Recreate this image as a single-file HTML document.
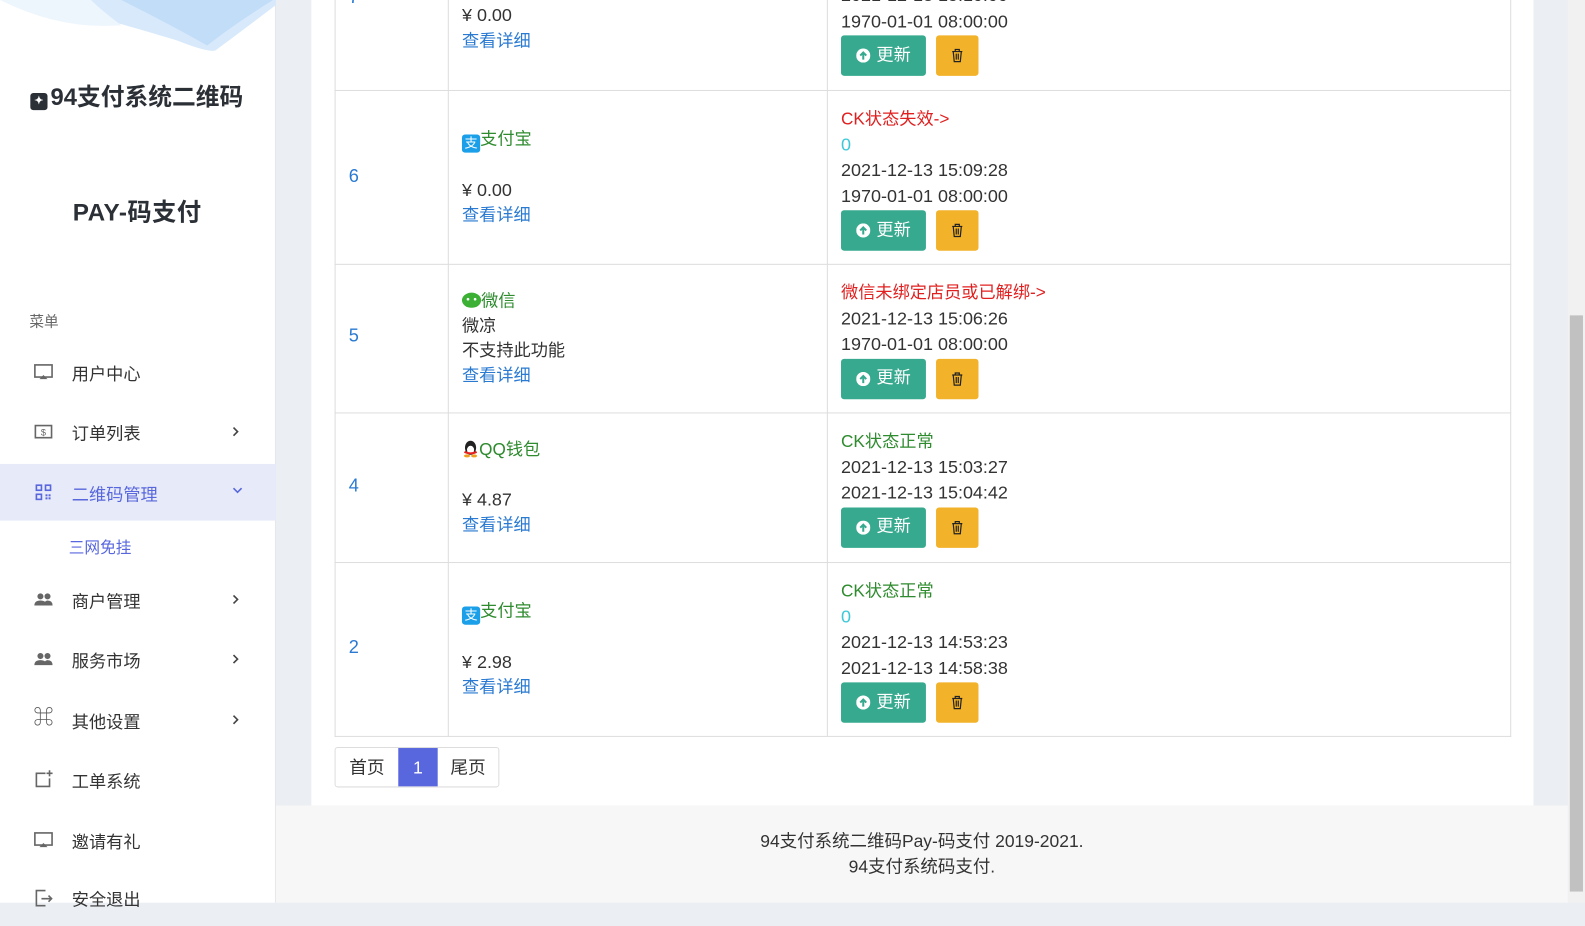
<!DOCTYPE html>
<html><head><meta charset="utf-8">
<style>
*{margin:0;padding:0;box-sizing:border-box}
body{width:1585px;height:903px;overflow:hidden;position:relative;background:#ebeef2;font-family:"Liberation Sans","Noto Sans CJK SC",sans-serif;font-size:17px;color:#333}
#w{position:absolute;left:0;top:0;width:1568px;height:893px;transform:scale(1.01084);transform-origin:0 0;background:#ebeef2}
.abs{position:absolute}
#side{left:0;top:0;width:273px;height:893px;background:#fff;border-right:1px solid #e4e6ea}
.mi{position:absolute;left:0;width:273px;height:56px;font-size:17px;color:#333}
.mi .ic{position:absolute;left:33px;top:18px;width:20px;height:20px}
.mi .tx{position:absolute;left:71px;top:16px}
.mi .ar{position:absolute;left:229px;top:22px}
#card{left:308px;top:0;width:1209px;height:797px;background:#fff}
#foot{left:273px;top:797px;width:1278px;height:96px;background:#f7f7f7;text-align:center;font-size:17.3px;color:#333;line-height:25px;padding-top:23px;padding-right:0}
#sb{left:1551px;top:0;width:17px;height:893px;background:#f1f1f1}
.hl{position:absolute;left:331px;width:1164px;height:1px;background:#ddd}
.vl{position:absolute;width:1px;background:#ddd}
.cell{position:absolute;line-height:24.6px;font-size:17px}
.d{font-size:17.8px}
.num{position:absolute;left:345px;color:#2a7ad2;font-size:18px}
.blue{color:#2a7ad2}.green{color:#2e8b2e}.red{color:#e02020}.cyan{color:#3cc8d8}
.btns{display:flex;gap:10px;margin-top:1px}
.bu{width:84px;height:40px;background:#36a98e;border-radius:3px;color:#fff;display:flex;align-items:center;justify-content:center;gap:6px;font-size:17px}
.bd{width:42px;height:40px;background:#f2b22a;border-radius:3px;display:flex;align-items:center;justify-content:center}
.ali{display:inline-block;width:18px;height:18px;background:#1a9fe8;border-radius:3px;vertical-align:-3px;color:#fff;font-size:13px;line-height:18px;text-align:center}
</style></head><body>
<div id="w">
<div id="side" class="abs">
  <svg class="abs" style="left:0;top:0" width="273" height="60" viewBox="0 0 273 60">
    <path d="M30 0 Q110 20 175 40 Q205 52 213 50 Q240 30 273 5 L273 0Z" fill="#d7e9fb"/>
    <path d="M120 0 Q170 25 205 45 Q230 25 270 0Z" fill="#bcdaf6" opacity=".8"/>
    <path d="M0 0 Q60 30 120 25 Q100 10 90 0Z" fill="#eef6fd"/>
  </svg>
  <div class="abs" style="left:30px;top:77px;font-size:23.5px;font-weight:bold;color:#2b2f36;white-space:nowrap"><span style="display:inline-block;width:17px;height:17px;background:#2b2f36;border-radius:3px;vertical-align:1px;margin-right:3px;color:#fff;font-size:11px;text-align:center;line-height:17px">✦</span>94支付系统二维码</div>
  <div class="abs" style="left:72px;top:190px;font-size:24px;font-weight:bold;color:#2b2f36;letter-spacing:0.5px">PAY-码支付</div>
  <div class="abs" style="left:29px;top:307px;font-size:14.5px;color:#666">菜单</div>
  <div class="mi" style="top:340px"><svg class="ic" viewBox="0 0 20 20"><rect x="1.5" y="3" width="17" height="12" fill="none" stroke="#666" stroke-width="1.6"/><path d="M6 17h8l-4-4z" fill="#666"/></svg><span class="tx">用户中心</span></div>
  <div class="mi" style="top:399px"><svg class="ic" viewBox="0 0 20 20"><rect x="2" y="4" width="16" height="12" fill="none" stroke="#666" stroke-width="1.6"/><text x="10" y="14" font-size="9" text-anchor="middle" fill="#666" font-family="Liberation Sans">$</text></svg><span class="tx">订单列表</span><svg class="ar" width="8" height="12" viewBox="0 0 8 12"><path d="M2 2l4 4-4 4" stroke="#444" stroke-width="1.6" fill="none"/></svg></div>
  <div class="mi" style="top:459px;background:#e7eaf8"><svg class="ic" viewBox="0 0 20 20" fill="#5867dd"><rect x="3" y="3" width="5" height="5" fill="none" stroke="#5867dd" stroke-width="1.6"/><rect x="3" y="12" width="5" height="5" fill="none" stroke="#5867dd" stroke-width="1.6"/><rect x="12" y="3" width="5" height="5" fill="none" stroke="#5867dd" stroke-width="1.6"/><rect x="12" y="12" width="2" height="2"/><rect x="15" y="15" width="2" height="2"/><rect x="15" y="12" width="2" height="2"/><rect x="12" y="15" width="2" height="2"/></svg><span class="tx" style="color:#5867dd">二维码管理</span><svg class="ar" width="12" height="8" viewBox="0 0 12 8"><path d="M2 2l4 4 4-4" stroke="#5867dd" stroke-width="1.6" fill="none"/></svg></div>
  <div class="abs" style="left:68px;top:530px;font-size:15.5px;color:#5867dd">三网免挂</div>
  <div class="mi" style="top:565px"><svg class="ic" viewBox="0 0 20 20" fill="#666"><circle cx="7" cy="7" r="3"/><circle cx="14" cy="7" r="3"/><path d="M1 16q0-5 6-5t6 5zM10 16q1-5 4-5 5 0 5 5z"/></svg><span class="tx">商户管理</span><svg class="ar" width="8" height="12" viewBox="0 0 8 12"><path d="M2 2l4 4-4 4" stroke="#444" stroke-width="1.6" fill="none"/></svg></div>
  <div class="mi" style="top:624px"><svg class="ic" viewBox="0 0 20 20" fill="#666"><circle cx="7" cy="7" r="3"/><circle cx="14" cy="7" r="3"/><path d="M1 16q0-5 6-5t6 5zM10 16q1-5 4-5 5 0 5 5z"/></svg><span class="tx">服务市场</span><svg class="ar" width="8" height="12" viewBox="0 0 8 12"><path d="M2 2l4 4-4 4" stroke="#444" stroke-width="1.6" fill="none"/></svg></div>
  <div class="mi" style="top:684px"><span class="ic" style="font-size:20px;color:#555;line-height:20px;top:16px">⌘</span><span class="tx">其他设置</span><svg class="ar" width="8" height="12" viewBox="0 0 8 12"><path d="M2 2l4 4-4 4" stroke="#444" stroke-width="1.6" fill="none"/></svg></div>
  <div class="mi" style="top:743px"><svg class="ic" viewBox="0 0 20 20"><path d="M12 4H3v13h13V9" fill="none" stroke="#666" stroke-width="1.6"/><path d="M16 1v6M13 4h6" stroke="#666" stroke-width="1.6"/></svg><span class="tx">工单系统</span></div>
  <div class="mi" style="top:803px"><svg class="ic" viewBox="0 0 20 20"><rect x="1.5" y="3" width="17" height="12" fill="none" stroke="#666" stroke-width="1.6"/><path d="M6 17h8l-4-4z" fill="#666"/></svg><span class="tx">邀请有礼</span></div>
  <div class="mi" style="top:860px"><svg class="ic" viewBox="0 0 20 20"><path d="M12 3H3v15h9" fill="none" stroke="#666" stroke-width="1.6"/><path d="M8 11h10M15 8l3 3-3 3" fill="none" stroke="#666" stroke-width="1.6"/></svg><span class="tx">安全退出</span></div>
</div>

<div id="card" class="abs"></div>
<div class="vl" style="left:331px;top:0;height:729px"></div>
<div class="vl" style="left:1494px;top:0;height:729px"></div>
<div class="vl" style="left:443px;top:0;height:729px"></div>
<div class="vl" style="left:818px;top:0;height:729px"></div>
<div class="hl" style="top:89px"></div>
<div class="hl" style="top:261px"></div>
<div class="hl" style="top:408px"></div>
<div class="hl" style="top:556px"></div>
<div class="hl" style="top:728px"></div>

<div class="num" style="top:-13px">7</div>
<div class="cell" style="left:457px;top:3px"><span class="d">¥ 0.00</span><br><span class="blue">查看详细</span></div>
<div class="cell" style="left:832px;top:-17px"><span class="d">2021-12-13 15:10:00</span><br><span class="d">1970-01-01 08:00:00</span>
<div class="btns"><div class="bu"><svg width="14" height="14" viewBox="0 0 14 14"><circle cx="7" cy="7" r="7" fill="#fff"/><path d="M7 11V4M4 7l3-3 3 3" stroke="#36a98e" stroke-width="2" fill="none"/></svg>更新</div><div class="bd"><svg width="12" height="14" viewBox="0 0 12 14"><path d="M1 3h10M4 3V1h4v2M2 3l1 10h6l1-10M5 5v6M7 5v6" stroke="#222" stroke-width="1.2" fill="none"/></svg></div></div></div>

<div class="num" style="top:164px">6</div>
<div class="cell" style="left:457px;top:126px"><span class="ali">支</span><span class="green">支付宝</span><br>&nbsp;<br><span class="d">¥ 0.00</span><br><span class="blue">查看详细</span></div>
<div class="cell" style="left:832px;top:106px"><span class="red">CK状态失效-&gt;</span><br><span class="cyan d">0</span><br><span class="d">2021-12-13 15:09:28</span><br><span class="d">1970-01-01 08:00:00</span>
<div class="btns"><div class="bu"><svg width="14" height="14" viewBox="0 0 14 14"><circle cx="7" cy="7" r="7" fill="#fff"/><path d="M7 11V4M4 7l3-3 3 3" stroke="#36a98e" stroke-width="2" fill="none"/></svg>更新</div><div class="bd"><svg width="12" height="14" viewBox="0 0 12 14"><path d="M1 3h10M4 3V1h4v2M2 3l1 10h6l1-10M5 5v6M7 5v6" stroke="#222" stroke-width="1.2" fill="none"/></svg></div></div></div>

<div class="num" style="top:322px">5</div>
<div class="cell" style="left:457px;top:286px"><svg width="19" height="16" viewBox="0 0 19 16" style="vertical-align:-2px"><ellipse cx="9.5" cy="8" rx="9.5" ry="7.5" fill="#3cb034"/><circle cx="6" cy="7" r="1.3" fill="#fff"/><circle cx="13" cy="7" r="1.3" fill="#fff"/></svg><span class="green">微信</span><br>微凉<br>不支持此功能<br><span class="blue">查看详细</span></div>
<div class="cell" style="left:832px;top:278px"><span class="red">微信未绑定店员或已解绑-&gt;</span><br><span class="d">2021-12-13 15:06:26</span><br><span class="d">1970-01-01 08:00:00</span>
<div class="btns"><div class="bu"><svg width="14" height="14" viewBox="0 0 14 14"><circle cx="7" cy="7" r="7" fill="#fff"/><path d="M7 11V4M4 7l3-3 3 3" stroke="#36a98e" stroke-width="2" fill="none"/></svg>更新</div><div class="bd"><svg width="12" height="14" viewBox="0 0 12 14"><path d="M1 3h10M4 3V1h4v2M2 3l1 10h6l1-10M5 5v6M7 5v6" stroke="#222" stroke-width="1.2" fill="none"/></svg></div></div></div>

<div class="num" style="top:470px">4</div>
<div class="cell" style="left:457px;top:433px"><svg width="17" height="18" viewBox="0 0 17 18" style="vertical-align:-3px"><ellipse cx="8.5" cy="8" rx="5.5" ry="7" fill="#222"/><ellipse cx="8.5" cy="10" rx="3.5" ry="4" fill="#fff"/><path d="M3 11q5.5 3 11 0l1 2q-6 3-13 0z" fill="#e52222"/><ellipse cx="5" cy="16" rx="3" ry="1.5" fill="#f0a020"/><ellipse cx="12" cy="16" rx="3" ry="1.5" fill="#f0a020"/></svg><span class="green">QQ钱包</span><br>&nbsp;<br><span class="d">¥ 4.87</span><br><span class="blue">查看详细</span></div>
<div class="cell" style="left:832px;top:425px"><span class="green">CK状态正常</span><br><span class="d">2021-12-13 15:03:27</span><br><span class="d">2021-12-13 15:04:42</span>
<div class="btns"><div class="bu"><svg width="14" height="14" viewBox="0 0 14 14"><circle cx="7" cy="7" r="7" fill="#fff"/><path d="M7 11V4M4 7l3-3 3 3" stroke="#36a98e" stroke-width="2" fill="none"/></svg>更新</div><div class="bd"><svg width="12" height="14" viewBox="0 0 12 14"><path d="M1 3h10M4 3V1h4v2M2 3l1 10h6l1-10M5 5v6M7 5v6" stroke="#222" stroke-width="1.2" fill="none"/></svg></div></div></div>

<div class="num" style="top:630px">2</div>
<div class="cell" style="left:457px;top:593px"><span class="ali">支</span><span class="green">支付宝</span><br>&nbsp;<br><span class="d">¥ 2.98</span><br><span class="blue">查看详细</span></div>
<div class="cell" style="left:832px;top:573px"><span class="green">CK状态正常</span><br><span class="cyan d">0</span><br><span class="d">2021-12-13 14:53:23</span><br><span class="d">2021-12-13 14:58:38</span>
<div class="btns"><div class="bu"><svg width="14" height="14" viewBox="0 0 14 14"><circle cx="7" cy="7" r="7" fill="#fff"/><path d="M7 11V4M4 7l3-3 3 3" stroke="#36a98e" stroke-width="2" fill="none"/></svg>更新</div><div class="bd"><svg width="12" height="14" viewBox="0 0 12 14"><path d="M1 3h10M4 3V1h4v2M2 3l1 10h6l1-10M5 5v6M7 5v6" stroke="#222" stroke-width="1.2" fill="none"/></svg></div></div></div>

<div class="abs" style="left:331px;top:739px;width:163px;height:40px;border:1px solid #ddd;border-radius:3px;display:flex;font-size:17.5px;line-height:38px;overflow:hidden">
  <div style="width:62px;text-align:center">首页</div>
  <div style="width:39px;text-align:center;background:#5867dd;color:#fff">1</div>
  <div style="width:60px;text-align:center">尾页</div>
</div>

<div id="foot" class="abs">94支付系统二维码Pay-码支付 2019-2021.<br>94支付系统码支付.</div>

<div id="sb" class="abs"><div class="abs" style="left:2px;top:312px;width:13px;height:570px;background:#c1c1c1"></div></div>
</div>
</body></html>
